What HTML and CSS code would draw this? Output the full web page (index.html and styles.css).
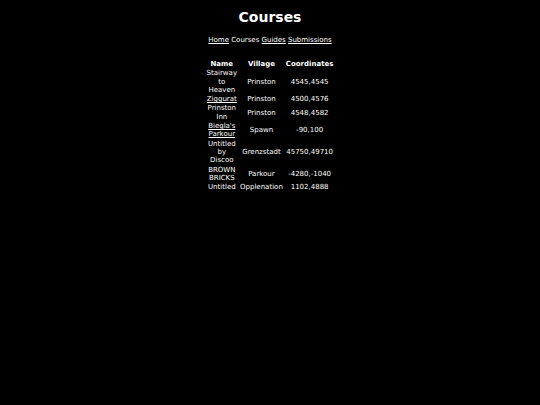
FILE: index.html
```html
<!DOCTYPE html>
<html>
<head>
<meta charset="utf-8">
<link rel="stylesheet" href="styles.css">
</head>
<body>
<div class="page">
  <h1 class="title">Courses</h1>
  <nav class="nav"><a href="#">Home</a> Courses <a href="#">Guides</a> <a href="#">Submissions</a></nav>
  <table class="courses">
    <thead>
      <tr><th>Name</th><th>Village</th><th>Coordinates</th></tr>
    </thead>
    <tbody>
      <tr><td>Stairway to Heaven</td><td>Prinston</td><td>4545,4545</td></tr>
      <tr><td><a href="#">Ziggurat</a></td><td>Prinston</td><td>4500,4576</td></tr>
      <tr><td>Prinston Inn</td><td>Prinston</td><td>4548,4582</td></tr>
      <tr><td><a href="#">Biegla's Parkour</a></td><td>Spawn</td><td>-90,100</td></tr>
      <tr><td>Untitled by Discoo</td><td>Grenzstadt</td><td>45750,49710</td></tr>
      <tr><td>BROWN BRICKS</td><td>Parkour</td><td>-4280,-1040</td></tr>
      <tr><td>Untitled</td><td>Opplenation</td><td>1102,4888</td></tr>
    </tbody>
  </table>
</div>
</body>
</html>
```
FILE: styles.css
```css
html, body {
  margin: 0;
  background: #000;
  color: #fff;
  font-family: "DejaVu Sans", Verdana, sans-serif;
  font-size: 7px;
}
.page {
  display: flex;
  flex-direction: column;
  align-items: center;
  padding-top: 8px;
}
.title {
  font-size: 14px;
  font-weight: bold;
  margin: 0;
  line-height: 18px;
}
.nav {
  margin-top: 10px;
  line-height: 8px;
}
.nav a, .courses a {
  color: #fff;
  text-decoration: underline;
}
.courses {
  margin-top: 15px;
  width: min-content;
  border-spacing: 2px 1.8px;
  text-align: center;
}
.courses th, .courses td {
  padding: 0 0.5px;
  line-height: 8.3px;
}
.courses th {
  font-weight: bold;
}
```
